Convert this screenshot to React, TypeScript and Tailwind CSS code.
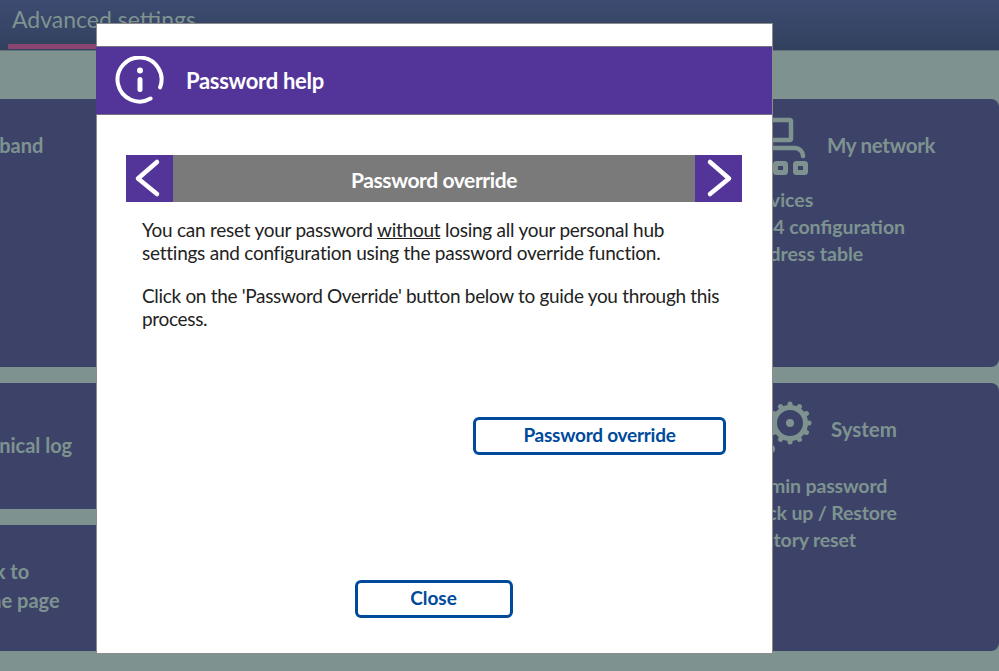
const FONT = "font-['Lato','Noto_Sans',sans-serif]";

function InfoIcon() {
  return (
    <svg width="50" height="50" viewBox="0 0 50 50" fill="none" className="shrink-0">
      <path
        d="M39 40 A22 22 0 1 1 46 27"
        stroke="white"
        strokeWidth="4"
        strokeLinecap="round"
        transform="rotate(12 25 25)"
      />
      <circle cx="25" cy="14.5" r="3" fill="white" />
      <rect x="22.5" y="21" width="5" height="15" rx="2.5" fill="white" />
    </svg>
  );
}

function Chevron({ dir }: { dir: "left" | "right" }) {
  return (
    <svg width="47" height="47" viewBox="0 0 47 47" fill="none" stroke="white" strokeWidth="4.5" strokeLinecap="round" strokeLinejoin="round">
      {dir === "left" ? <path d="M31 7 L12 23.5 L31 39" /> : <path d="M15 7 L34 23.5 L15 39" />}
    </svg>
  );
}

function NetworkIcon() {
  return (
    <svg width="70" height="60" viewBox="0 0 70 60" fill="none" stroke="#7e9390" className="shrink-0">
      <rect x="20" y="3" width="26" height="20" rx="1.5" strokeWidth="4.5" />
      <path d="M26 23 V31 M10 31 H50 a8 8 0 0 1 8 8" strokeWidth="4.5" strokeLinecap="round" />
      <path d="M10 31 V40" strokeWidth="4.5" />
      <rect x="10.5" y="46.5" width="10" height="9" rx="1" strokeWidth="5" />
      <rect x="30.5" y="46.5" width="10" height="9" rx="1" strokeWidth="5" />
      <rect x="50.5" y="46.5" width="10" height="9" rx="1" strokeWidth="5" />
    </svg>
  );
}

function GearIcon() {
  const teeth = [0, 30, 60, 90, 120, 150, 180, 210, 240, 270, 300, 330];
  return (
    <svg width="74" height="60" viewBox="0 0 74 60" fill="none" className="shrink-0">
      {teeth.map((a) => (
        <rect key={a} x="42.5" y="2.5" width="5" height="8" rx="2.5" fill="#7e9390" transform={`rotate(${a} 45 24)`} />
      ))}
      <circle cx="45" cy="24" r="15.5" stroke="#7e9390" strokeWidth="5" />
      <circle cx="45" cy="24" r="4" fill="#7e9390" />
      <circle cx="26" cy="50" r="4" fill="#7e9390" />
    </svg>
  );
}

function Card({ className, children }: { className: string; children: React.ReactNode }) {
  return <div className={`bg-[#3d4368] rounded-[8px] ${className}`}>{children}</div>;
}

export default function App() {
  return (
    <div className={`relative h-[671px] w-[999px] overflow-hidden bg-[#7e9390] ${FONT}`}>
      <div className="h-[51px] border-b border-[#5f7379] bg-gradient-to-b from-[#3c4b70] to-[#33415f] pl-2">
        <div className="inline-block h-[49px] w-[300px] border-b-[5px] border-[#8a4570] pl-1 pt-[2px] text-[23px] leading-[34px] text-[#7e9390]">
          Advanced settings
        </div>
      </div>

      <div className="mt-[48px] flex justify-between">
        <div className="-ml-[300px] flex w-[500px] flex-col gap-[16px] text-[20px] font-bold text-[#7e9390]">
          <Card className="h-[268px] pl-[246px] pt-[31px]">Broadband</Card>
          <Card className="h-[126px] pl-[258px] pt-[47px]">Technical log</Card>
          <Card className="h-[126px] pl-[262px] pt-[32px] leading-[29px]">
            Back to
            <br />
            home page
          </Card>
        </div>
        <div className="flex w-[400px] flex-col gap-[16px] text-[20.5px] font-bold text-[#7e9390]">
          <Card className="h-[268px] pl-[146px] pt-[18px]">
            <div className="flex items-center gap-[12px]">
              <NetworkIcon />
              <span className="-mt-[4px] tracking-[-0.3px]">My network</span>
            </div>
            <div className="mt-[9px] text-[19.5px] leading-[27px]">
              <div>Devices</div>
              <div>IPv4 configuration</div>
              <div>Address table</div>
            </div>
          </Card>
          <Card className="h-[268px] pl-[146px] pt-[16px]">
            <div className="flex items-center gap-[12px]">
              <GearIcon />
              <span>System</span>
            </div>
            <div className="mt-[13px] text-[19.5px] leading-[27px] tracking-[-0.15px]">
              <div>Admin password</div>
              <div>Back up / Restore</div>
              <div>Factory reset</div>
            </div>
          </Card>
        </div>
      </div>

      {/* modal sits over the page */}
      <div className="absolute left-[96px] top-[23px] h-[631px] w-[677px] border border-[#8c8c8c] bg-white">
        <div className="-ml-px mt-[22px] flex h-[69px] items-center border-y border-[#77717f] bg-[#53359a] pl-[19px] text-white">
          <InfoIcon />
          <span className="ml-[21px] text-[22px] font-bold leading-[30px] tracking-[-0.3px]">Password help</span>
        </div>
        <div className="ml-[29px] mr-[30px] mt-[40px] flex h-[47px] items-center justify-between bg-[#7a7a7a] text-white">
          <div className="flex h-full w-[47px] items-center justify-center bg-[#53359a]">
            <Chevron dir="left" />
          </div>
          <span className="mt-[2px] text-[21px] font-bold tracking-[-0.4px]">Password override</span>
          <div className="flex h-full w-[47px] items-center justify-center bg-[#53359a]">
            <Chevron dir="right" />
          </div>
        </div>
        <div className="ml-[45px] mr-[47px] mt-[16px] text-[19px] leading-[23px] tracking-[-0.25px] text-[#222]">
          <p>
            You can reset your password <span className="underline">without</span> losing all your personal hub settings
            and configuration using the password override function.
          </p>
          <p className="mt-[20px] tracking-[-0.32px]">
            Click on the 'Password Override' button below to guide you through this process.
          </p>
        </div>
        <div className="mr-[46px] mt-[87px] flex justify-end">
          <button className="h-[38px] w-[253px] rounded-[6px] border-[3px] border-[#004a9c] pb-[2px] text-[19px] font-bold tracking-[-0.25px] text-[#004a9c]">
            Password override
          </button>
        </div>
        <div className="mt-[125px] flex justify-center pr-[2px]">
          <button className="h-[38px] w-[158px] rounded-[6px] border-[3px] border-[#004a9c] pb-[2px] text-[19px] font-bold text-[#004a9c]">
            Close
          </button>
        </div>
      </div>
    </div>
  );
}
